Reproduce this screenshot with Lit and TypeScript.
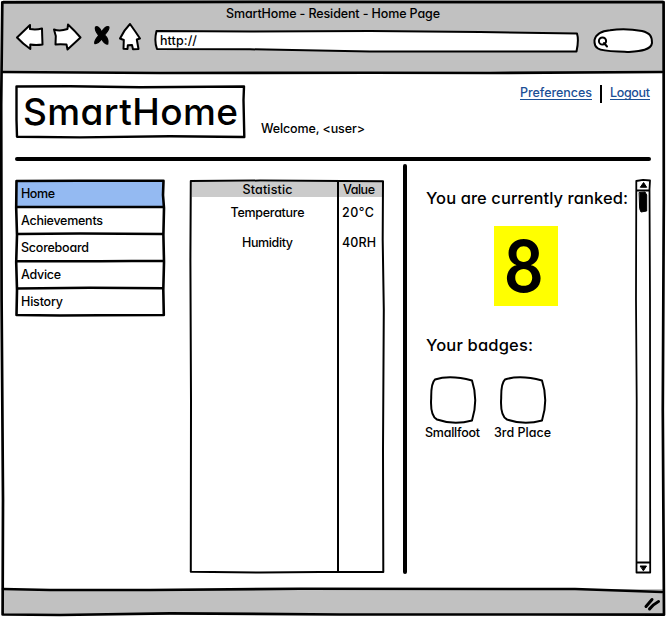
import { LitElement, html, css, svg } from "lit";
import { customElement, property } from "lit/decorators.js";

/** One line of text, tracked so that it spans `span` pixels. */
@customElement("fit-label")
class FitLabel extends LitElement {
  @property({ type: Number }) span = 0;
  @property() text = "";
  static styles = css`
    :host { display: block; white-space: pre; flex: none; }
  `;
  render() {
    return html`<span>${this.text}</span>`;
  }
  firstUpdated() {
    const el = this.renderRoot.querySelector("span") as HTMLElement;
    const natural = el.getBoundingClientRect().width;
    const gaps = this.text.length - 1;
    if (gaps > 0 && this.span) {
      this.style.width = `${this.span}px`;
      el.style.letterSpacing = `${(this.span - natural) / gaps}px`;
    }
  }
}

const label = (text: string, span: number, cls = "") =>
  html`<fit-label class=${cls} .text=${text} .span=${span}></fit-label>`;

const menu: [string, number][] = [
  ["Home", 34], ["Achievements", 82], ["Scoreboard", 68], ["Advice", 40], ["History", 42],
];
const stats: [string, number, string, number][] = [
  ["Temperature", 74, "20°C", 32],
  ["Humidity", 51, "40RH", 34],
];
const badges: [string, number][] = [["Smallfoot", 55], ["3rd Place", 57]];

@customElement("app-root")
class AppRoot extends LitElement {
  static styles = css`
    :host {
      display: block;
      font: 500 12.5px/16px Inter, "Noto Sans", sans-serif;
      font-feature-settings: "cv11";
      color: #000;
    }
    .window {
      position: relative;
      width: 666px;
      height: 617px;
      display: flex;
      flex-direction: column;
      background: #fff;
      overflow: hidden;
    }
    svg { display: block; fill: none; stroke: #000; stroke-width: 2; stroke-linejoin: round; stroke-linecap: round; flex: none; }
    .outline { position: absolute; inset: 0; width: 100%; height: 100%; overflow: visible; pointer-events: none; }
    .white { fill: #fff; }
    .solid { fill: #000; }
    .chrome { height: 72px; margin: 0 3px 0 3px; background: #c1c1c1; flex: none; }
    .title { display: flex; justify-content: center; padding-top: 6px; }
    .tools { display: flex; height: 32px; padding-left: 12px; }
    .forward { margin-left: 7px; }
    .stop { margin-left: 10px; }
    .home { margin-left: 6px; }
    .address { position: relative; width: 426px; margin-left: 10px; padding: 11px 0 0 6px; box-sizing: border-box; }
    .address fit-label { position: relative; }
    .search { margin-left: 12px; }
    .top { display: flex; height: 85px; padding: 13px 15px 0; box-sizing: border-box; flex: none; }
    .logo { position: relative; width: 230px; height: 53px; padding: 5px 0 0 8px; box-sizing: border-box; font-size: 37px; line-height: 44px; }
    .logo fit-label { position: relative; }
    .welcome { margin: 36px 0 0 16px; }
    .links { display: flex; margin: 0 1px 0 auto; color: #1b5096; }
    .link { height: 14px; border-bottom: 1px solid #1b5096; }
    .bar { width: 2px; height: 18px; background: #000; margin: 0 8px; }
    .rule { height: 4px; margin: 0 15px; border-radius: 2px; background: #000; flex: none; }
    .main { display: flex; height: 428px; padding-left: 15px; flex: none; }
    .main > * { flex: none; }
    .menu { position: relative; width: 150px; height: 137px; margin-top: 19px; padding: 1px 1px 0; box-sizing: border-box; }
    .item { height: 27px; padding: 5px 0 0 5px; box-sizing: border-box; }
    .item.active { background: #94baf2; }
    .table { position: relative; width: 194px; height: 394px; margin: 19px 0 0 25px; padding: 2px 2px 0; box-sizing: border-box; }
    .row { display: grid; grid-template-columns: 146px 44px; height: 30px; align-items: center; }
    .row.head { height: 15px; background: #cbcbcb; margin-bottom: 1px; }
    .row fit-label:first-child { justify-self: center; margin-left: 5px; }
    .row fit-label:last-child { margin-left: 4px; }
    .row.head fit-label:last-child { margin-left: 5px; }
    .split { width: 4px; height: 410px; margin: 3px 0 0 19px; border-radius: 2px; background: #000; }
    .panel { width: 209px; padding: 27px 0 0 19px; box-sizing: content-box; }
    .panel h2 { margin: 0; font: inherit; font-size: 16.5px; line-height: 20px; }
    .rank { width: 64px; height: 80px; margin: 18px 0 0 68px; background: #ff0; font-size: 71px; line-height: 80px; font-weight: 600; display: flex; justify-content: center; }
    .digit { transform: scaleX(.88); margin-left: -4px; }
    .panel .second { margin-top: 29px; }
    .badges { display: flex; margin-top: 21px; gap: 14px; margin-left: -1px; }
    .badge { display: flex; flex-direction: column; align-items: center; gap: 1px; }
    .scroll { margin-top: 17px; }
    .status { height: 27px; margin: auto 3px 2px; background: #c1c1c1; display: flex; justify-content: flex-end; align-items: center; }
    .grip { margin-top: 4px; margin-right: -1px; }
  `;

  frame() {
    return html`<svg class="outline" viewBox="0 0 666 617">
      <path stroke-width="2.7" d="M2.3 2.3 L250 1.8 L663.6 2.2 L663.8 200 L662.8 410 L664 614.7 L530 614.5 L340 614.5 L170 613.4 L60 615 L2.6 614.5 L3 500 L1.6 300 L1.2 105 Z" />
      <path style="stroke-width:2.6" d="M2.5 72 L160 73 L370 72.8 L490 73 L662 72 M3 589 L50 590 L150 590 L300 588.8 L575 589 L662 592" />
    </svg>`;
  }

  render() {
    return html`<div class="window">
      <header class="chrome">
        <div class="title">${label("SmartHome - Resident - Home Page", 214)}</div>
        <div class="tools">
          <svg width="30" height="32" viewBox="15 22 30 32"><path class="white" d="M17 37.5 L30 25 L30 29 Q36 30 42 28.5 L42.2 36 L42.5 44.5 Q36 45.5 30.3 44.5 L30.3 49 Q23 44 17 37.5Z"/></svg>
          <svg class="forward" width="30" height="32" viewBox="52 22 30 32"><path class="white" d="M54 29.5 Q60 31.5 67.5 29 L68 24.5 Q75 31 80.5 37.5 L67.5 49.5 L66.5 44.5 Q60 44 55.5 44.5 L55.8 36 Z"/></svg>
          <svg class="stop" width="20" height="32" viewBox="92 22 20 32"><path class="solid" style="stroke-width:1.2" d="M95.5 27 Q98.5 25.5 101.7 32 Q105 26 108.8 26.8 Q110 29 104.5 35 Q109 39 107.8 44 Q105 45 101.7 39 Q98 44 94.8 43.6 Q94 41 98.8 35.5 Q94.5 30.5 95.5 27Z"/></svg>
          <svg class="home" width="26" height="32" viewBox="118 22 26 32"><path class="white" d="M130 24 Q135 31 140 38.5 L136.8 39.5 L138.5 49 L133 49.3 L132 45 L127.8 45.3 L127.5 49 L123.5 48.7 L123.8 40 L120 38.5 Q124 30 130 24Z"/></svg>
          <div class="address">
            <svg class="outline" viewBox="154 22 426 32"><path class="white" d="M156.5 31 L250 31.5 L370 31 L480 32 L577 33.5 Q579 40 576.5 51.5 L370 51.5 L250 49.3 L157 49 Q154 41 156.5 31Z"/></svg>
            ${label("http://", 37)}
          </div>
          <svg class="search" width="64" height="32" viewBox="592 22 64 32"><path class="white" d="M594.5 40 C596 34 602 31 610 30.3 Q625 28 642 31 C650 33 652 36 652 43 C651 50 641 51 629 52 C618 51 603 52 598 48.5 Q594 46 594.5 40Z"/><circle cx="602.5" cy="41" r="3.6"/><path d="M604 43 L607 46.5"/></svg>
        </div>
      </header>
      <section class="top">
        <div class="logo">
          <svg class="outline" viewBox="15 85 230 53"><path style="stroke-width:2.4" d="M16.5 86.5 L70 86.2 L140 87.3 L244 86.5 L243.5 100 L244.3 137 L170 136.3 L80 137.4 L17 136.7 L16.5 120Z"/></svg>
          ${label("SmartHome", 215)}
        </div>
        ${label("Welcome, <user>", 104, "welcome")}
        <nav class="links">${label("Preferences", 72, "link")}<div class="bar"></div>${label("Logout", 40, "link")}</nav>
      </section>
      <div class="rule"></div>
      <section class="main">
        <nav class="menu">
          <svg class="outline" viewBox="15 180 150 137">${svg`<path style="stroke-width:2.6" d="M16.5 181 L80 180.8 L163.5 180.8 L163 195 L164 208 L163.4 235 L164 262 L163.3 290 L163.8 315 L100 315.3 L60 315.5 L16.5 315 L17 290 L16.2 262 L17 235 L16.2 208Z M17 207 H90 L163 206.8 M17 234 L80 233.5 L163 234 M17 261 L100 261.3 L163 260.8 M17 288.5 L90 287.7 L163 288.3"/>`}</svg>
          ${menu.map(([t, w], i) => html`<div class="item ${i === 0 ? "active" : ""}">${label(t, w)}</div>`)}
        </nav>
        <div class="table">
          <div class="row head">${label("Statistic", 50)}${label("Value", 32)}</div>
          ${stats.map(([n, nw, v, vw]) => html`<div class="row">${label(n, nw)}${label(v, vw)}</div>`)}
          <svg class="outline" viewBox="190 180 194 394"><path d="M190.8 181 L260 180.6 L383 181.3 L382.7 240 L383.8 310 L383 450 L383.3 572 L320 572 L260 572.6 L190.8 571.7 L191 400 L190.4 260Z M338 181 L338 572"/></svg>
        </div>
        <div class="split"></div>
        <div class="panel">
          <h2>${label("You are currently ranked:", 202)}</h2>
          <div class="rank"><span class="digit">8</span></div>
          <h2 class="second">${label("Your badges:", 107)}</h2>
          <div class="badges">
            ${badges.map(([t, w]) => html`<div class="badge">
              <svg width="48" height="48" viewBox="429 377 48 48"><path d="M435 380.5 Q450 375.5 472 381.5 Q478.5 401 472 421.5 Q454 426.5 437 420.5 Q430 417 431.2 399 Q431 384 435 380.5Z"/></svg>
              ${label(t, w)}
            </div>`)}
          </div>
        </div>
        <svg class="scroll" width="17" height="396" viewBox="635 178 17 396"><path style="stroke-width:1.8" d="M636.3 181 L643 179.8 L650 180.5 L649.5 189 L650 300 L650.2 572.5 L636.5 572.5 L636.7 400 L636 300Z M636.5 190.3 L649.5 190.5 M637 562.5 H650"/><path class="solid" style="stroke-width:1" d="M640.5 187 L643.6 182.5 L646.5 187Z M640.5 566 L646.5 566 L643.6 570.5Z M639.5 192.5 L645 192 L646.7 195 L646.7 211 L641 212 L639.8 209Z"/></svg>
      </section>
      <footer class="status"><svg class="grip" width="22" height="20" viewBox="642 594 22 20"><path style="stroke-width:3" d="M646 606.5 L652 599.5 M649.5 609 Q653 604.5 658.5 601.5"/></svg></footer>
      ${this.frame()}
    </div>`;
  }
}
